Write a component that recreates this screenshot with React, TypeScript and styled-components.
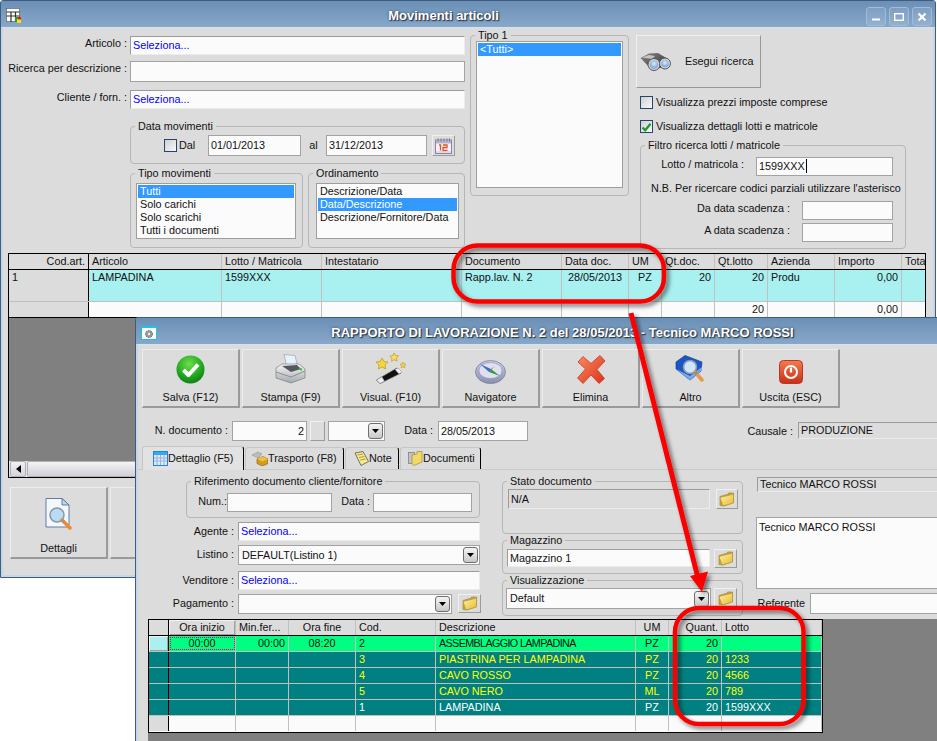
import React from "react"
import styled, { createGlobalStyle } from "styled-components"

const GlobalStyle = createGlobalStyle`
  html, body {
    margin: 0;
    padding: 0;
    background: #fff;
    overflow: hidden;
  }
  #root {
    position: relative;
    width: 937px;
    height: 741px;
    overflow: hidden;
    font: 10.8px/13px "Liberation Sans", Arial, sans-serif;
    color: #111;
  }
  * {
    box-sizing: border-box;
  }
`

const Desktop = styled.div`
  position: relative;
  width: 937px;
  height: 741px;
  overflow: hidden;
`

const Window = styled.section<{ $left: number; $top: number; $width: number; $height: number }>`
  position: absolute;
  left: ${p => p.$left}px;
  top: ${p => p.$top}px;
  width: ${p => p.$width}px;
  height: ${p => p.$height}px;
  display: flex;
  flex-direction: column;
  border: 1px solid #3f5c7c;
  border-radius: 3px 3px 0 0;
  background: #dcdcdc;
`

const TitleBar = styled.header`
  flex: none;
  height: 26px;
  display: flex;
  align-items: center;
  padding: 3px 3px 0 5px;
  background: linear-gradient(#6b8fb6, #88a8c9);
`

const Title = styled.h1`
  flex: 1;
  margin: 0;
  text-align: center;
  font-size: 13px;
  font-weight: bold;
  color: #fff;
  text-shadow: 1px 1px 1px rgba(20, 30, 45, 0.85), 0 0 3px rgba(20, 30, 45, 0.55);
`

const WindowControls = styled.div`
  display: flex;
  gap: 3px;
  margin-top: 2px;
`

const WindowControl = styled.div`
  width: 20px;
  height: 19px;
  display: flex;
  align-items: center;
  justify-content: center;
  border: 1px solid #a3bcd6;
  border-radius: 3px;
  background: linear-gradient(#7f9fc2, #93b0cf);
`

const WindowBody = styled.div`
  flex: 1;
  min-height: 0;
  display: flex;
  flex-direction: column;
  border: 2px solid #c4d6e8;
  border-top: 1px solid #d5e2ef;
  background: #dcdcdc;
`

const TopArea = styled.div`
  flex: none;
  height: 225px;
  display: flex;
`

const LeftColumn = styled.div`
  flex: none;
  width: 462px;
  padding-top: 8px;
`

const FieldRow = styled.div<{ $top?: number }>`
  display: flex;
  align-items: flex-start;
  margin-top: ${p => p.$top || 0}px;
`

const FieldLabel = styled.div<{ $width: number; $gap?: number; $left?: number; $line?: number }>`
  flex: none;
  width: ${p => p.$width}px;
  margin-left: ${p => p.$left || 0}px;
  margin-right: ${p => p.$gap ?? 3}px;
  text-align: right;
  white-space: nowrap;
  line-height: ${p => p.$line || 15}px;
`

const TextField = styled.div<{
  $width: number
  $height?: number
  $kind?: "plain" | "link" | "value" | "flat"
  $left?: number
  $right?: boolean
  $top?: number
}>`
  flex: none;
  width: ${p => p.$width}px;
  height: ${p => p.$height || 19}px;
  margin-left: ${p => p.$left || 0}px;
  margin-top: ${p => p.$top || 0}px;
  padding: 0 2px;
  white-space: nowrap;
  overflow: hidden;
  line-height: ${p => (p.$height || 19) - 2}px;
  text-align: ${p => (p.$right ? "right" : "left")};
  background: ${p => (p.$kind === "flat" ? "#dcdcdc" : "#fbfbfb")};
  color: ${p => (p.$kind === "link" ? "#0000ff" : "#111")};
  border: 1px solid #a2a2a2;
  ${p =>
    p.$kind && p.$kind !== "plain"
      ? "border-color: #9c9c9c #ececec #ececec #9c9c9c;"
      : ""}
`

const Caret = styled.span`
  display: inline-block;
  width: 1px;
  height: 14px;
  margin-left: 1px;
  vertical-align: -3px;
  background: #000;
`

const GroupBox = styled.fieldset<{
  $width: number
  $height?: number
  $left?: number
  $top?: number
}>`
  flex: none;
  display: block;
  min-width: 0;
  width: ${p => p.$width}px;
  ${p => (p.$height ? `height: ${p.$height}px;` : "")}
  margin: ${p => p.$top || 0}px 0 0 ${p => p.$left || 0}px;
  padding: 0;
  border: 1px solid #b6b6b6;
  border-radius: 4px;
`

const GroupTitle = styled.legend`
  margin-left: 4px;
  padding: 0 3px;
  line-height: 13px;
`

const GroupBody = styled.div<{ $pad: string }>`
  padding: ${p => p.$pad};
`

const GroupRow = styled.div`
  display: flex;
  align-items: flex-start;
`

const CheckBox = styled.div<{ $mt?: number }>`
  flex: none;
  width: 13px;
  height: 13px;
  margin-top: ${p => p.$mt || 0}px;
  display: flex;
  align-items: center;
  justify-content: center;
  border: 1px solid #24466e;
  background: linear-gradient(135deg, #d0d0d0, #f8f8f8);
`

const GroupText = styled.div<{ $width?: number; $center?: boolean; $line?: number; $left?: number }>`
  flex: none;
  ${p => (p.$width ? `width: ${p.$width}px;` : "")}
  margin-left: ${p => p.$left || 0}px;
  text-align: ${p => (p.$center ? "center" : "left")};
  line-height: ${p => p.$line || 21}px;
  white-space: nowrap;
`

const SquareButton = styled.div<{ $width: number; $height: number; $left?: number; $top?: number }>`
  flex: none;
  width: ${p => p.$width}px;
  height: ${p => p.$height}px;
  margin-left: ${p => p.$left || 0}px;
  margin-top: ${p => p.$top || 0}px;
  display: flex;
  align-items: center;
  justify-content: center;
  background: #dcdcdc;
  border: 1px solid;
  border-color: #f0f0f0 #9a9a9a #9a9a9a #f0f0f0;
`

const ListBox = styled.ul<{ $width: number; $height: number; $mt?: number }>`
  width: ${p => p.$width}px;
  height: ${p => p.$height}px;
  margin: ${p => p.$mt || 0}px 0 0;
  padding: 1px;
  list-style: none;
  background: #fbfbfb;
  border: 1px solid #9e9e9e;
`

const ListRow = styled.li<{ $selected?: boolean }>`
  height: 13px;
  line-height: 13px;
  padding-left: 2px;
  white-space: nowrap;
  background: ${p => (p.$selected ? "#3399ff" : "transparent")};
  color: ${p => (p.$selected ? "#fff" : "#111")};
`

const SideColumn = styled.div`
  flex: none;
  width: 289px;
  margin-left: 7px;
  padding-top: 7px;
`

const SearchButton = styled.div`
  width: 125px;
  height: 53px;
  display: flex;
  align-items: center;
  padding: 0 0 0 3px;
  gap: 14px;
  background: #dcdcdc;
  border: 1px solid;
  border-color: #f0f0f0 #989898 #989898 #f0f0f0;
`

const CheckRow = styled.div<{ $top: number }>`
  display: flex;
  align-items: center;
  gap: 3px;
  margin: ${p => p.$top}px 0 0 4px;
  height: 13px;
  white-space: nowrap;
`

const DataGrid = styled.div<{ $width: number; $height: number; $left?: number }>`
  flex: none;
  width: ${p => p.$width}px;
  height: ${p => p.$height}px;
  margin-left: ${p => p.$left || 0}px;
  display: flex;
  flex-direction: column;
  overflow: hidden;
  background: #808080;
  border: 1px solid #000;
`

const GridRow = styled.div<{ $cols: string; $height?: number; $bg?: string; $line?: string; $color?: string }>`
  flex: none;
  display: grid;
  grid-template-columns: ${p => p.$cols};
  height: ${p => p.$height || 16}px;
  background: ${p => p.$bg || "#fbfbfb"};
  color: ${p => p.$color || "#111"};
  border-bottom: 1px solid ${p => p.$line || "#c0c0c0"};
`

const GridCell = styled.div<{
  $align?: "left" | "center" | "right"
  $fixed?: boolean
  $bg?: string
  $raised?: boolean
  $focus?: boolean
  $tight?: boolean
}>`
  min-width: 0;
  padding: 0 3px;
  line-height: 15px;
  white-space: nowrap;
  overflow: hidden;
  text-align: ${p => p.$align || "left"};
  border-right: 1px solid ${p => (p.$fixed ? "#000" : "#c0c0c0")};
  ${p => (p.$tight ? "letter-spacing: -0.65px;" : "")}
  ${p => (p.$bg ? `background: ${p.$bg};` : "")}
  ${p =>
    p.$raised
      ? "box-shadow: inset 1px 1px 0 #f2f2f2, inset -1px -1px 0 #a0a0a0;"
      : ""}
  ${p => (p.$focus ? "outline: 1px dotted #e0007a; outline-offset: -2px;" : "")}
`

const GridFill = styled.div`
  flex: 1;
  background: #808080;
`

const ScrollBar = styled.div`
  flex: none;
  height: 16px;
  display: flex;
  padding-left: 1px;
  gap: 1px;
  background: #e4e4ea;
`

const ScrollArrow = styled.div`
  width: 16px;
  display: flex;
  align-items: center;
  justify-content: center;
  background: linear-gradient(#f2f2f4, #d4d4da);
  border: 1px solid #b0b0b6;
  border-radius: 2px;
`

const ScrollThumb = styled.div`
  flex: 1;
  background: linear-gradient(#f4f4f6, #d0d0d6);
  border: 1px solid #b0b0b6;
  border-radius: 2px;
`

const ActionRow = styled.div<{ $top: number; $left: number }>`
  flex: none;
  display: flex;
  gap: 2px;
  margin: ${p => p.$top}px 0 0 ${p => p.$left}px;
`

const ActionButton = styled.button<{ $height: number; $gap: number }>`
  flex: none;
  width: 98px;
  height: ${p => p.$height}px;
  display: flex;
  flex-direction: column;
  align-items: center;
  justify-content: flex-end;
  gap: ${p => p.$gap}px;
  padding: 0 0 2px;
  font: inherit;
  color: #111;
  background: #dcdcdc;
  border: 1px solid;
  border-color: #ededed #9a9a9a #9a9a9a #ededed;
  border-width: 1px 2px 2px 1px;
`

const DocRow = styled.div`
  flex: none;
  height: 20px;
  margin-top: 13px;
  display: flex;
  align-items: flex-start;
`

const TabStrip = styled.nav`
  flex: none;
  height: 25px;
  margin-top: 4px;
  padding-left: 4px;
  display: flex;
  align-items: flex-end;
  gap: 1px;
  border-bottom: 1px solid #c9c9c9;
`

const Tab = styled.div<{ $width: number; $active?: boolean; $pad: number }>`
  flex: none;
  width: ${p => p.$width}px;
  height: ${p => (p.$active ? 24 : 22)}px;
  display: flex;
  align-items: center;
  padding-left: ${p => p.$pad}px;
  white-space: nowrap;
  border-top: 1px solid #c6c6c6;
  border-left: 1px solid #c6c6c6;
  border-right: 1px solid #000;
  border-radius: 3px 3px 0 0;
  background: ${p => (p.$active ? "#e2e2e2" : "#dcdcdc")};
  margin-bottom: ${p => (p.$active ? -1 : 0)}px;
`

const TabPanel = styled.div`
  flex: none;
  height: 149px;
  display: flex;
  align-items: flex-start;
`

const PanelColumn = styled.div<{ $width: number; $left?: number }>`
  flex: none;
  width: ${p => p.$width}px;
  margin-left: ${p => p.$left || 0}px;
`

const ComboField = styled.div<{ $width: number; $height?: number; $left?: number }>`
  flex: none;
  width: ${p => p.$width}px;
  height: ${p => p.$height || 20}px;
  margin-left: ${p => p.$left || 0}px;
  display: flex;
  align-items: center;
  justify-content: space-between;
  padding: 0 1px 0 3px;
  white-space: nowrap;
  background: #fbfbfb;
  border: 1px solid #a2a2a2;
`

const ComboArrow = styled.div`
  flex: none;
  width: 15px;
  height: 16px;
  display: flex;
  align-items: center;
  justify-content: center;
  border: 1px solid #6e6e6e;
  border-radius: 3px;
  background: linear-gradient(#f4f4f4, #c8c8c8);
`

const MemoField = styled.div`
  width: 220px;
  height: 72px;
  padding: 3px 2px;
  background: #fbfbfb;
  border: 1px solid #a2a2a2;
`

const LowerArea = styled.div`
  flex: 1;
  margin-left: 10px;
  background: #808080;
`

const AnnotationLayer = styled.svg`
  position: absolute;
  left: 0;
  top: 0;
  pointer-events: none;
`

const Triangle = () => (
  <svg width="7" height="4" viewBox="0 0 7 4">
    <path d="M0 0h7L3.500 4z" fill="#000" />
  </svg>
)

const Folder = () => (
  <svg width="16" height="15" viewBox="0 0 16 15">
    <defs>
      <linearGradient id="fold" x1="0" y1="0" x2="1" y2="1">
        <stop offset="0" stopColor="#fff3a8" />
        <stop offset="1" stopColor="#e6b92e" />
      </linearGradient>
    </defs>
    <path d="M1 4.500 9.500 2V1h5v9.500L5 14l-4-.5z" fill="#cda532" stroke="#a88c36" strokeWidth=".7" />
    <path d="M1 5.500 11 3l3.500-1v9L4 14z" fill="url(#fold)" stroke="#b3953a" strokeWidth=".7" />
  </svg>
)

const MainWindowIcon = () => (
  <svg width="15" height="15" viewBox="0 0 15 15">
    <rect x=".5" y=".5" width="13" height="13" fill="#fff" stroke="#555" strokeWidth=".6" />
    <path d="M.5 4h13M5 4v10M9.500 4v10M.5 8h13" stroke="#333" strokeWidth="1.200" fill="none" />
    <rect x="9" y="9" width="5" height="5" fill="#2c9b2c" />
    <rect x="11" y="11" width="4" height="4" fill="#f2e018" />
    <rect x="12" y="9" width="3" height="2.500" fill="#d82020" />
  </svg>
)

const DocumentWindowIcon = () => (
  <svg width="16" height="14" viewBox="0 0 16 14">
    <rect x=".5" y=".5" width="15" height="13" fill="#fff" stroke="#1fc3e8" />
    <rect x="0" y="0" width="16" height="2" fill="#1fc3e8" />
    <circle cx="8" cy="8" r="3.500" fill="#999" stroke="#666" strokeWidth="1" strokeDasharray="1.500 1" />
    <circle cx="8" cy="8" r="1.200" fill="#eee" />
  </svg>
)

const Binoculars = () => (
  <svg width="31" height="20" viewBox="0 0 31 20">
    <defs>
      <linearGradient id="bin" x1="0" y1="0" x2="1" y2="1">
        <stop offset="0" stopColor="#8a8a8a" />
        <stop offset="1" stopColor="#2c2c2c" />
      </linearGradient>
      <radialGradient id="lens" cx=".5" cy=".4" r=".6">
        <stop offset="0" stopColor="#d8ecff" />
        <stop offset="1" stopColor="#6f9fd8" />
      </radialGradient>
    </defs>
    <path d="M.5 6 9 1.500 18 1l10 6-4 8-12 3z" fill="url(#bin)" />
    <path d="M2 5.500 9 3l6 1-3 3z" fill="#c4c4c4" />
    <circle cx="14" cy="12.500" r="6" fill="#d4d4d4" stroke="#555" />
    <circle cx="14" cy="12.500" r="4.300" fill="url(#lens)" />
    <circle cx="25" cy="11.500" r="5.500" fill="#d4d4d4" stroke="#555" />
    <circle cx="25" cy="11.500" r="3.800" fill="url(#lens)" />
  </svg>
)

const CalendarIcon = () => (
  <svg width="17" height="16" viewBox="0 0 17 16">
    <rect x=".5" y="2" width="16" height="13.500" fill="#f4f2fa" stroke="#8884a8" />
    <rect x="1" y="2.500" width="15" height="3" fill="#b7b3d2" />
    <path d="M3 .5v3M6 .5v3M9 .5v3M12 .5v3M14.500 .5v3" stroke="#777" />
    <path d="M4 7h1.500v5.500M8 7h4v2.500H8V12.500h4.500" fill="none" stroke="#e8521c" strokeWidth="1.300" />
    <path d="M1 14h15" stroke="#c8c4de" />
  </svg>
)

const Tick = () => (
  <svg width="11" height="10" viewBox="0 0 11 10">
    <path d="M1.500 5.500 4.200 8.300 9.500 1.800" fill="none" stroke="#169b2a" strokeWidth="2.200" />
  </svg>
)

const SaveIcon = () => (
  <svg width="29" height="29" viewBox="0 0 29 29">
    <defs>
      <radialGradient id="sav" cx=".45" cy=".3" r=".8">
        <stop offset="0" stopColor="#6fde4a" />
        <stop offset=".6" stopColor="#1fa51f" />
        <stop offset="1" stopColor="#0c6f18" />
      </radialGradient>
    </defs>
    <circle cx="14.500" cy="14.500" r="14" fill="url(#sav)" />
    <path d="M7.500 15 12.500 20 22 9.500" fill="none" stroke="#fff" strokeWidth="4" strokeLinejoin="round" />
  </svg>
)

const PrinterIcon = () => (
  <svg width="31" height="30" viewBox="0 0 31 30">
    <defs>
      <linearGradient id="prn" x1="0" y1="0" x2="0" y2="1">
        <stop offset="0" stopColor="#f6f6f6" />
        <stop offset="1" stopColor="#a4a8ae" />
      </linearGradient>
    </defs>
    <path d="M9 .5 20 1.500l2 8-10 4z" fill="#e8f2fb" stroke="#93a3b3" strokeWidth=".7" />
    <path d="M1 14 7 10h17l6 5v9l-14 5L1 24z" fill="url(#prn)" stroke="#7b8087" strokeWidth=".7" />
    <path d="M7 12 22 11l4 4-10 3z" fill="#55595f" />
    <path d="M1 18 16 23l14-6" fill="none" stroke="#8a8e94" />
    <path d="M24 14.500l3 1.200" stroke="#38c040" strokeWidth="2" />
  </svg>
)

const WandIcon = () => (
  <svg width="31" height="31" viewBox="0 0 31 31">
    <path d="M1.500 27 22 15l4 5L5 30.500z" fill="#111" stroke="#555" strokeWidth=".6" />
    <path d="M1.500 27 7 23.800 9.500 28.200 5 30.500z" fill="#eee" stroke="#888" strokeWidth=".5" />
    <path d="M20 16.500 23 15l4 4-3 2z" fill="#f2f2f2" stroke="#888" strokeWidth=".5" />
    <path d="M7 5 9 8.500l4 .5-3 3 .8 4L7 14l-3.700 2 .7-4L1 9l4-.5z" fill="#f6d43a" stroke="#b58a1c" strokeWidth=".6" />
    <path d="M19 0l1.500 2.500 3 .3-2 2.200.6 3-3-1.300-2.600 1.500.4-3-2-2 3-.6z" fill="#f8de5c" stroke="#b58a1c" strokeWidth=".6" />
    <path d="M28 9l1 2 2 .3-1.500 1.400.4 2-1.900-1-1.800 1 .4-2L25 11.300l2-.3z" fill="#f6d43a" stroke="#b58a1c" strokeWidth=".5" />
  </svg>
)

const CompassIcon = () => (
  <svg width="31" height="24" viewBox="0 0 31 24">
    <defs>
      <linearGradient id="cmp" x1="0" y1="0" x2="0" y2="1">
        <stop offset="0" stopColor="#c9cbe4" />
        <stop offset="1" stopColor="#8b8fae" />
      </linearGradient>
    </defs>
    <ellipse cx="15.500" cy="12" rx="15" ry="11.500" fill="url(#cmp)" stroke="#777a96" strokeWidth=".7" />
    <ellipse cx="15.500" cy="10.500" rx="11.500" ry="8" fill="#dfe1f2" stroke="#8c8fab" strokeWidth=".6" />
    <path d="M5 4 16 9l-2 3z" fill="#3a70c8" />
    <path d="M16 9 25 16l-11-4z" fill="#2ba03a" />
    <path d="M14 12 16 9l4-3z" fill="#e04a2a" />
  </svg>
)

const DeleteIcon = () => (
  <svg width="30" height="29" viewBox="0 0 30 29">
    <defs>
      <linearGradient id="del" x1="0" y1="0" x2="1" y2="1">
        <stop offset="0" stopColor="#ff8a5e" />
        <stop offset="1" stopColor="#d8321a" />
      </linearGradient>
    </defs>
    <path d="M2 7 7 1.500l8 7L24 .5l5 5.500-8 8.500 7.500 9L23 28.500l-8-8.500-8 8.500-5.500-5.500 8-9z" fill="url(#del)" stroke="#c43a22" strokeWidth=".8" strokeLinejoin="round" />
  </svg>
)

const FindIcon = () => (
  <svg width="31" height="29" viewBox="0 0 31 29">
    <path d="M1 7 10 .5 27 7l-1 9-11 9L1 14z" fill="#1a56c4" stroke="#143f90" strokeWidth=".7" />
    <path d="M1 14 15 21l12-9v3L15 25z" fill="#7fa8e8" />
    <circle cx="15" cy="12" r="6.500" fill="#cfe6fa" stroke="#8d9aa8" strokeWidth="1.600" />
    <path d="M20 17 27 25" stroke="#e89a4a" strokeWidth="3.500" strokeLinecap="round" />
    <path d="M20 17l2 2" stroke="#888" strokeWidth="3" />
  </svg>
)

const PowerIcon = () => (
  <svg width="24" height="24" viewBox="0 0 24 24">
    <defs>
      <linearGradient id="pow" x1="0" y1="0" x2="0" y2="1">
        <stop offset="0" stopColor="#f47c4c" />
        <stop offset="1" stopColor="#c82e18" />
      </linearGradient>
    </defs>
    <rect x=".5" y=".5" width="23" height="23" rx="4" fill="url(#pow)" stroke="#b53a22" />
    <circle cx="12" cy="12" r="6" fill="none" stroke="#fff" strokeWidth="2" />
    <path d="M12 7.500v5" stroke="#fff" strokeWidth="2.200" />
  </svg>
)

const DetailsIcon = () => (
  <svg width="28" height="32" viewBox="0 0 28 32">
    <path d="M1 .5h16L24 7v22H1z" fill="#f4f8fd" stroke="#5e7ea6" />
    <path d="M17 .5V7h7z" fill="#c6d6e8" stroke="#5e7ea6" />
    <circle cx="12" cy="17" r="7" fill="#b8dcf4" stroke="#8a96a2" strokeWidth="1.500" />
    <path d="M17 22 25 30" stroke="#f08a2a" strokeWidth="3.500" strokeLinecap="round" />
    <path d="M17 22l2 2" stroke="#999" strokeWidth="3" />
  </svg>
)

const TabCalendar = () => (
  <svg width="15" height="15" viewBox="0 0 15 15">
    <rect x=".5" y=".5" width="14" height="14" fill="#dbe8f8" stroke="#1f86e0" />
    <rect x="1" y="1" width="13" height="3" fill="#35a8f0" />
    <path d="M1 7h13M1 10h13M4 4v10M7.500 4v10M11 4v10" stroke="#9ab4d8" />
  </svg>
)

const TabBoxes = () => (
  <svg width="16" height="15" viewBox="0 0 16 15">
    <path d="M0 4 6 1l4 2-4 4z" fill="#bcbcbc" stroke="#8a8a8a" strokeWidth=".5" />
    <path d="M5 8 11 5.500 16 8v4.500L10.500 15 5 12.500z" fill="#d89a1a" stroke="#7a5a14" strokeWidth=".6" />
    <path d="M5 8 10.500 10.500 16 8l-5-2.500z" fill="#f0c040" />
  </svg>
)

const TabNote = () => (
  <svg width="15" height="15" viewBox="0 0 15 15">
    <path d="M1 2 9 .5l5.500 10L7 14.500z" fill="#f8e888" stroke="#555" strokeWidth=".8" />
    <path d="M3.500 4 9 3M5 6.500 10.500 5.500M6.300 9 11.500 8" stroke="#8a7a30" strokeWidth=".7" />
  </svg>
)

const TabDocuments = () => (
  <svg width="15" height="15" viewBox="0 0 15 15">
    <rect x=".5" y="1.500" width="6" height="11" fill="#c4c4c4" stroke="#777" strokeWidth=".7" />
    <path d="M4 4 9 3V.5h5V11l-8 3.500L4 13z" fill="#f2d868" stroke="#a08a38" strokeWidth=".7" />
  </svg>
)

const Annotations = () => (
  <AnnotationLayer width="937" height="741" viewBox="0 0 937 741">
    <defs>
      <filter id="soft" x="-20%" y="-20%" width="140%" height="140%">
        <feDropShadow dx="3" dy="3" stdDeviation="2.200" floodColor="#000" floodOpacity=".5" />
      </filter>
    </defs>
    <g filter="url(#soft)">
      <rect x="453.500" y="245.500" width="210.500" height="56" rx="24" fill="none" stroke="#fb0000" strokeWidth="4.500" />
      <rect x="675" y="608" width="128.500" height="116" rx="24" fill="none" stroke="#fb0000" strokeWidth="4.500" />
      <path d="M631 313 698 578" stroke="#fb0000" strokeWidth="5" />
      <path d="M690 576 708 571.500 702 592z" fill="#fb0000" />
    </g>
  </AnnotationLayer>
)

const mainCols = "80px 133px 100px 140px 100px 67px 33px 53px 53px 67px 67px 24px"
const mainHeaders: [string, "left" | "right"][] = [
  ["Cod.art.", "right"],
  ["Articolo", "left"],
  ["Lotto / Matricola", "left"],
  ["Intestatario", "left"],
  ["Documento", "left"],
  ["Data doc.", "left"],
  ["UM", "left"],
  ["Qt.doc.", "left"],
  ["Qt.lotto", "left"],
  ["Azienda", "left"],
  ["Importo", "left"],
  ["Tota", "left"],
]

const detailCols = "20px 67px 53px 67px 80px 200px 33px 53px 100px"
const detailRows = [
  { cod: "3", name: "PIASTRINA PER LAMPADINA", um: "PZ", lot: "1233", color: "#ffff00" },
  { cod: "4", name: "CAVO ROSSO", um: "PZ", lot: "4566", color: "#ffff00" },
  { cod: "5", name: "CAVO NERO", um: "ML", lot: "789", color: "#ffff00" },
  { cod: "1", name: "LAMPADINA", um: "PZ", lot: "1599XXX", color: "#fff" },
]

const tools = [
  { label: "Salva (F12)", icon: <SaveIcon /> },
  { label: "Stampa (F9)", icon: <PrinterIcon /> },
  { label: "Visual. (F10)", icon: <WandIcon /> },
  { label: "Navigatore", icon: <CompassIcon /> },
  { label: "Elimina", icon: <DeleteIcon /> },
  { label: "Altro", icon: <FindIcon /> },
  { label: "Uscita (ESC)", icon: <PowerIcon /> },
]

const Controls = () => (
  <WindowControls>
    <WindowControl>
      <svg width="10" height="10" viewBox="0 0 10 10">
        <path d="M1 7.500h8" stroke="#fff" strokeWidth="2" />
      </svg>
    </WindowControl>
    <WindowControl>
      <svg width="10" height="10" viewBox="0 0 10 10">
        <rect x=".7" y="1.700" width="8.600" height="6.600" fill="none" stroke="#fff" strokeWidth="1.400" />
      </svg>
    </WindowControl>
    <WindowControl>
      <svg width="10" height="10" viewBox="0 0 10 10">
        <path d="M1.500 1.500l7 7M8.500 1.500l-7 7" stroke="#fff" strokeWidth="2.200" />
      </svg>
    </WindowControl>
  </WindowControls>
)

const MovimentiWindow = () => (
  <Window $left={0} $top={0} $width={936} $height={578}>
    <TitleBar>
      <MainWindowIcon />
      <Title>Movimenti articoli</Title>
      <Controls />
    </TitleBar>
    <WindowBody>
      <TopArea>
        <LeftColumn>
          <FieldRow>
            <FieldLabel $width={124}>Articolo :</FieldLabel>
            <TextField $width={335} $kind="link">Seleziona...</TextField>
          </FieldRow>
          <FieldRow $top={6}>
            <FieldLabel $width={124}>Ricerca per descrizione :</FieldLabel>
            <TextField $width={335} $height={21} />
          </FieldRow>
          <FieldRow $top={8}>
            <FieldLabel $width={124}>Cliente / forn. :</FieldLabel>
            <TextField $width={335} $kind="link">Seleziona...</TextField>
          </FieldRow>
          <GroupBox $width={335} $left={127} $top={11}>
            <GroupTitle>Data movimenti</GroupTitle>
            <GroupBody $pad="2px 0 7px 33px">
              <GroupRow>
                <CheckBox $mt={4} />
                <GroupText $width={31} $left={2}>Dal</GroupText>
                <TextField $width={93} $height={21} $kind="plain" $left={-2}>01/01/2013</TextField>
                <GroupText $width={25} $center>al</GroupText>
                <TextField $width={101} $height={21} $kind="plain">31/12/2013</TextField>
                <SquareButton $width={23} $height={21} $left={5}>
                  <CalendarIcon />
                </SquareButton>
              </GroupRow>
            </GroupBody>
          </GroupBox>
          <GroupRow>
            <GroupBox $width={173} $left={127} $top={3}>
              <GroupTitle>Tipo movimenti</GroupTitle>
              <GroupBody $pad="3px 0 8px 5px">
                <ListBox $width={160} $height={56}>
                  <ListRow $selected>Tutti</ListRow>
                  <ListRow>Solo carichi</ListRow>
                  <ListRow>Solo scarichi</ListRow>
                  <ListRow>Tutti i documenti</ListRow>
                </ListBox>
              </GroupBody>
            </GroupBox>
            <GroupBox $width={157} $left={5} $top={3}>
              <GroupTitle>Ordinamento</GroupTitle>
              <GroupBody $pad="3px 0 8px 7px">
                <ListBox $width={143} $height={56}>
                  <ListRow>Descrizione/Data</ListRow>
                  <ListRow $selected>Data/Descrizione</ListRow>
                  <ListRow>Descrizione/Fornitore/Data</ListRow>
                </ListBox>
              </GroupBody>
            </GroupBox>
          </GroupRow>
        </LeftColumn>
        <GroupBox $width={159} $left={5} $top={1} $height={167}>
          <GroupTitle>Tipo 1</GroupTitle>
          <GroupBody $pad="0 0 0 5px">
            <ListBox $width={147} $height={147} $mt={-1}>
              <ListRow $selected>&lt;Tutti&gt;</ListRow>
            </ListBox>
          </GroupBody>
        </GroupBox>
        <SideColumn>
          <SearchButton>
            <Binoculars />
            Esegui ricerca
          </SearchButton>
          <CheckRow $top={8}>
            <CheckBox />
            Visualizza prezzi imposte comprese
          </CheckRow>
          <CheckRow $top={11}>
            <CheckBox>
              <Tick />
            </CheckBox>
            Visualizza dettagli lotti e matricole
          </CheckRow>
          <GroupBox $width={266} $left={4} $top={6}>
            <GroupTitle>Filtro ricerca lotti / matricole</GroupTitle>
            <GroupBody $pad="5px 0 6px 0">
              <FieldRow>
                <FieldLabel $width={103} $gap={12}>Lotto / matricola :</FieldLabel>
                <TextField $width={137} $kind="plain">
                  1599XXX
                  <Caret />
                </TextField>
              </FieldRow>
              <FieldRow $top={5}>
                <GroupText $line={14} $left={10}>N.B. Per ricercare codici parziali utilizzare l'asterisco</GroupText>
              </FieldRow>
              <FieldRow $top={6}>
                <FieldLabel $width={149} $gap={12}>Da data scadenza :</FieldLabel>
                <TextField $width={91} $kind="plain" />
              </FieldRow>
              <FieldRow $top={3}>
                <FieldLabel $width={149} $gap={12}>A data scadenza :</FieldLabel>
                <TextField $width={91} $kind="plain" />
              </FieldRow>
            </GroupBody>
          </GroupBox>
        </SideColumn>
      </TopArea>
      <DataGrid $width={918} $height={225} $left={5}>
        <GridRow $cols={mainCols} $bg="#dcdcdc" $line="#000">
          {mainHeaders.map(([text, align], i) => (
            <GridCell key={text} $align={align} $fixed={i === 0}>
              {text}
            </GridCell>
          ))}
        </GridRow>
        <GridRow $cols={mainCols} $height={32} $bg="#a9f0f0">
          <GridCell $fixed $bg="#dcdcdc">1</GridCell>
          <GridCell>LAMPADINA</GridCell>
          <GridCell>1599XXX</GridCell>
          <GridCell />
          <GridCell>Rapp.lav. N. 2</GridCell>
          <GridCell $align="center">28/05/2013</GridCell>
          <GridCell $align="center">PZ</GridCell>
          <GridCell $align="right">20</GridCell>
          <GridCell $align="right">20</GridCell>
          <GridCell>Produ</GridCell>
          <GridCell $align="right">0,00</GridCell>
          <GridCell />
        </GridRow>
        <GridRow $cols={mainCols} $line="#000">
          <GridCell $fixed $bg="#dcdcdc" />
          <GridCell />
          <GridCell />
          <GridCell />
          <GridCell />
          <GridCell />
          <GridCell />
          <GridCell />
          <GridCell $align="right">20</GridCell>
          <GridCell />
          <GridCell $align="right">0,00</GridCell>
          <GridCell />
        </GridRow>
        <GridFill />
        <ScrollBar>
          <ScrollArrow>
            <svg width="5" height="8" viewBox="0 0 5 8">
              <path d="M5 0v8L0 4z" fill="#000" />
            </svg>
          </ScrollArrow>
          <ScrollThumb />
        </ScrollBar>
      </DataGrid>
      <ActionRow $top={9} $left={7}>
        <ActionButton $height={72} $gap={12}>
          <DetailsIcon />
          Dettagli
        </ActionButton>
        <ActionButton $height={72} $gap={12} />
      </ActionRow>
    </WindowBody>
  </Window>
)

const RapportoWindow = () => (
  <Window $left={135} $top={317} $width={903} $height={440}>
    <TitleBar>
      <DocumentWindowIcon />
      <Title>RAPPORTO DI LAVORAZIONE N. 2 del 28/05/2013 - Tecnico MARCO ROSSI</Title>
      <Controls />
    </TitleBar>
    <WindowBody>
      <ActionRow $top={4} $left={4}>
        {tools.map(tool => (
          <ActionButton key={tool.label} $height={59} $gap={7}>
            {tool.icon}
            {tool.label}
          </ActionButton>
        ))}
      </ActionRow>
      <DocRow>
        <FieldLabel $width={90} $gap={4} $line={19}>N. documento :</FieldLabel>
        <TextField $width={75} $right $kind="plain" $height={20}>2</TextField>
        <SquareButton $width={15} $height={20} $left={3} />
        <ComboField $width={57} $height={20} $left={3}>
          &nbsp;
          <ComboArrow>
            <Triangle />
          </ComboArrow>
        </ComboField>
        <FieldLabel $width={48} $gap={5} $line={19}>Data :</FieldLabel>
        <TextField $width={90} $kind="plain" $height={20}>28/05/2013</TextField>
        <FieldLabel $width={265} $gap={5} $line={20}>Causale :</FieldLabel>
        <TextField $width={240} $height={17} $kind="flat" $top={1}>PRODUZIONE</TextField>
      </DocRow>
      <TabStrip>
        <Tab $active $width={102} $pad={10}>
          <TabCalendar />
          Dettaglio (F5)
        </Tab>
        <Tab $width={99} $pad={6}>
          <TabBoxes />
          Trasporto (F8)
        </Tab>
        <Tab $width={54} $pad={8}>
          <TabNote />
          Note
        </Tab>
        <Tab $width={81} $pad={7}>
          <TabDocuments />
          Documenti
        </Tab>
      </TabStrip>
      <TabPanel>
        <PanelColumn $width={342}>
          <GroupBox $width={294} $left={48} $top={5}>
            <GroupTitle>Riferimento documento cliente/fornitore</GroupTitle>
            <GroupBody $pad="5px 0 5px 7px">
              <GroupRow>
                <FieldLabel $width={33} $gap={0} $line={17}>Num.:</FieldLabel>
                <TextField $width={105} $kind="plain" />
                <FieldLabel $width={36} $left={5} $gap={0} $line={17}>Data :&nbsp;</FieldLabel>
                <TextField $width={99} $kind="plain" />
              </GroupRow>
            </GroupBody>
          </GroupBox>
          <FieldRow $top={4}>
            <FieldLabel $width={96} $gap={4} $line={19}>Agente :</FieldLabel>
            <TextField $width={242} $kind="link">Seleziona...</TextField>
          </FieldRow>
          <FieldRow $top={4}>
            <FieldLabel $width={96} $gap={4} $line={19}>Listino :</FieldLabel>
            <ComboField $width={242} $height={20}>
              DEFAULT(Listino 1)
              <ComboArrow>
                <Triangle />
              </ComboArrow>
            </ComboField>
          </FieldRow>
          <FieldRow $top={6}>
            <FieldLabel $width={96} $gap={4} $line={19}>Venditore :</FieldLabel>
            <TextField $width={242} $kind="link">Seleziona...</TextField>
          </FieldRow>
          <FieldRow $top={4}>
            <FieldLabel $width={96} $gap={4} $line={19}>Pagamento :</FieldLabel>
            <ComboField $width={214} $height={20}>
              &nbsp;
              <ComboArrow>
                <Triangle />
              </ComboArrow>
            </ComboField>
            <SquareButton $width={23} $height={19} $left={6}>
              <Folder />
            </SquareButton>
          </FieldRow>
        </PanelColumn>
        <PanelColumn $width={241} $left={22}>
          <GroupBox $width={241} $height={59} $top={5}>
            <GroupTitle>Stato documento</GroupTitle>
            <GroupBody $pad="1px 0 0 5px">
              <GroupRow>
                <TextField $width={202} $height={20} $kind="flat">N/A</TextField>
                <SquareButton $width={22} $height={20} $left={6}>
                  <Folder />
                </SquareButton>
              </GroupRow>
            </GroupBody>
          </GroupBox>
          <GroupBox $width={241} $height={40}>
            <GroupTitle>Magazzino</GroupTitle>
            <GroupBody $pad="2px 0 0 4px">
              <GroupRow>
                <TextField $width={203} $height={18} $kind="value">Magazzino 1</TextField>
                <SquareButton $width={23} $height={19} $left={4}>
                  <Folder />
                </SquareButton>
              </GroupRow>
            </GroupBody>
          </GroupBox>
          <GroupBox $width={241} $height={42}>
            <GroupTitle>Visualizzazione</GroupTitle>
            <GroupBody $pad="1px 0 0 3px">
              <GroupRow>
                <ComboField $width={205} $height={21}>
                  Default
                  <ComboArrow>
                    <Triangle />
                  </ComboArrow>
                </ComboField>
                <SquareButton $width={23} $height={20} $left={3}>
                  <Folder />
                </SquareButton>
              </GroupRow>
            </GroupBody>
          </GroupBox>
        </PanelColumn>
        <PanelColumn $width={220} $left={13}>
          <TextField $width={219} $left={1} $top={7} $height={15} $kind="flat">Tecnico MARCO ROSSI</TextField>
          <FieldRow $top={25}>
            <MemoField>Tecnico MARCO ROSSI</MemoField>
          </FieldRow>
          <FieldRow $top={4}>
            <FieldLabel $width={49} $gap={5} $line={20}>Referente</FieldLabel>
            <TextField $width={170} $height={21} $kind="plain" />
          </FieldRow>
        </PanelColumn>
      </TabPanel>
      <LowerArea>
        <DataGrid $width={675} $height={114}>
          <GridRow $cols={detailCols} $bg="#dcdcdc" $line="#000">
            <GridCell $fixed />
            <GridCell $align="center" $raised>Ora inizio</GridCell>
            <GridCell>Min.fer...</GridCell>
            <GridCell $align="center">Ora fine</GridCell>
            <GridCell>Cod.</GridCell>
            <GridCell>Descrizione</GridCell>
            <GridCell $align="center">UM</GridCell>
            <GridCell $align="right">Quant.</GridCell>
            <GridCell>Lotto</GridCell>
          </GridRow>
          <GridRow $cols={detailCols} $bg="#00ff80">
            <GridCell $fixed $bg="#a9f0f0" $raised />
            <GridCell $align="center" $focus>00:00</GridCell>
            <GridCell $align="right">00:00</GridCell>
            <GridCell $align="center">08:20</GridCell>
            <GridCell>2</GridCell>
            <GridCell $tight>ASSEMBLAGGIO LAMPADINA</GridCell>
            <GridCell $align="center">PZ</GridCell>
            <GridCell $align="right">20</GridCell>
            <GridCell />
          </GridRow>
          {detailRows.map(row => (
            <GridRow key={row.cod} $cols={detailCols} $bg="#008080" $color={row.color}>
              <GridCell $fixed />
              <GridCell />
              <GridCell />
              <GridCell />
              <GridCell>{row.cod}</GridCell>
              <GridCell>{row.name}</GridCell>
              <GridCell $align="center">{row.um}</GridCell>
              <GridCell $align="right">20</GridCell>
              <GridCell>{row.lot}</GridCell>
            </GridRow>
          ))}
          <GridRow $cols={detailCols} $line="#fbfbfb">
            <GridCell $fixed $bg="#dcdcdc" />
            <GridCell />
            <GridCell />
            <GridCell />
            <GridCell />
            <GridCell />
            <GridCell />
            <GridCell />
            <GridCell />
          </GridRow>
        </DataGrid>
      </LowerArea>
    </WindowBody>
  </Window>
)

export default function App() {
  return (
    <Desktop>
      <GlobalStyle />
      <MovimentiWindow />
      <RapportoWindow />
      <Annotations />
    </Desktop>
  )
}
